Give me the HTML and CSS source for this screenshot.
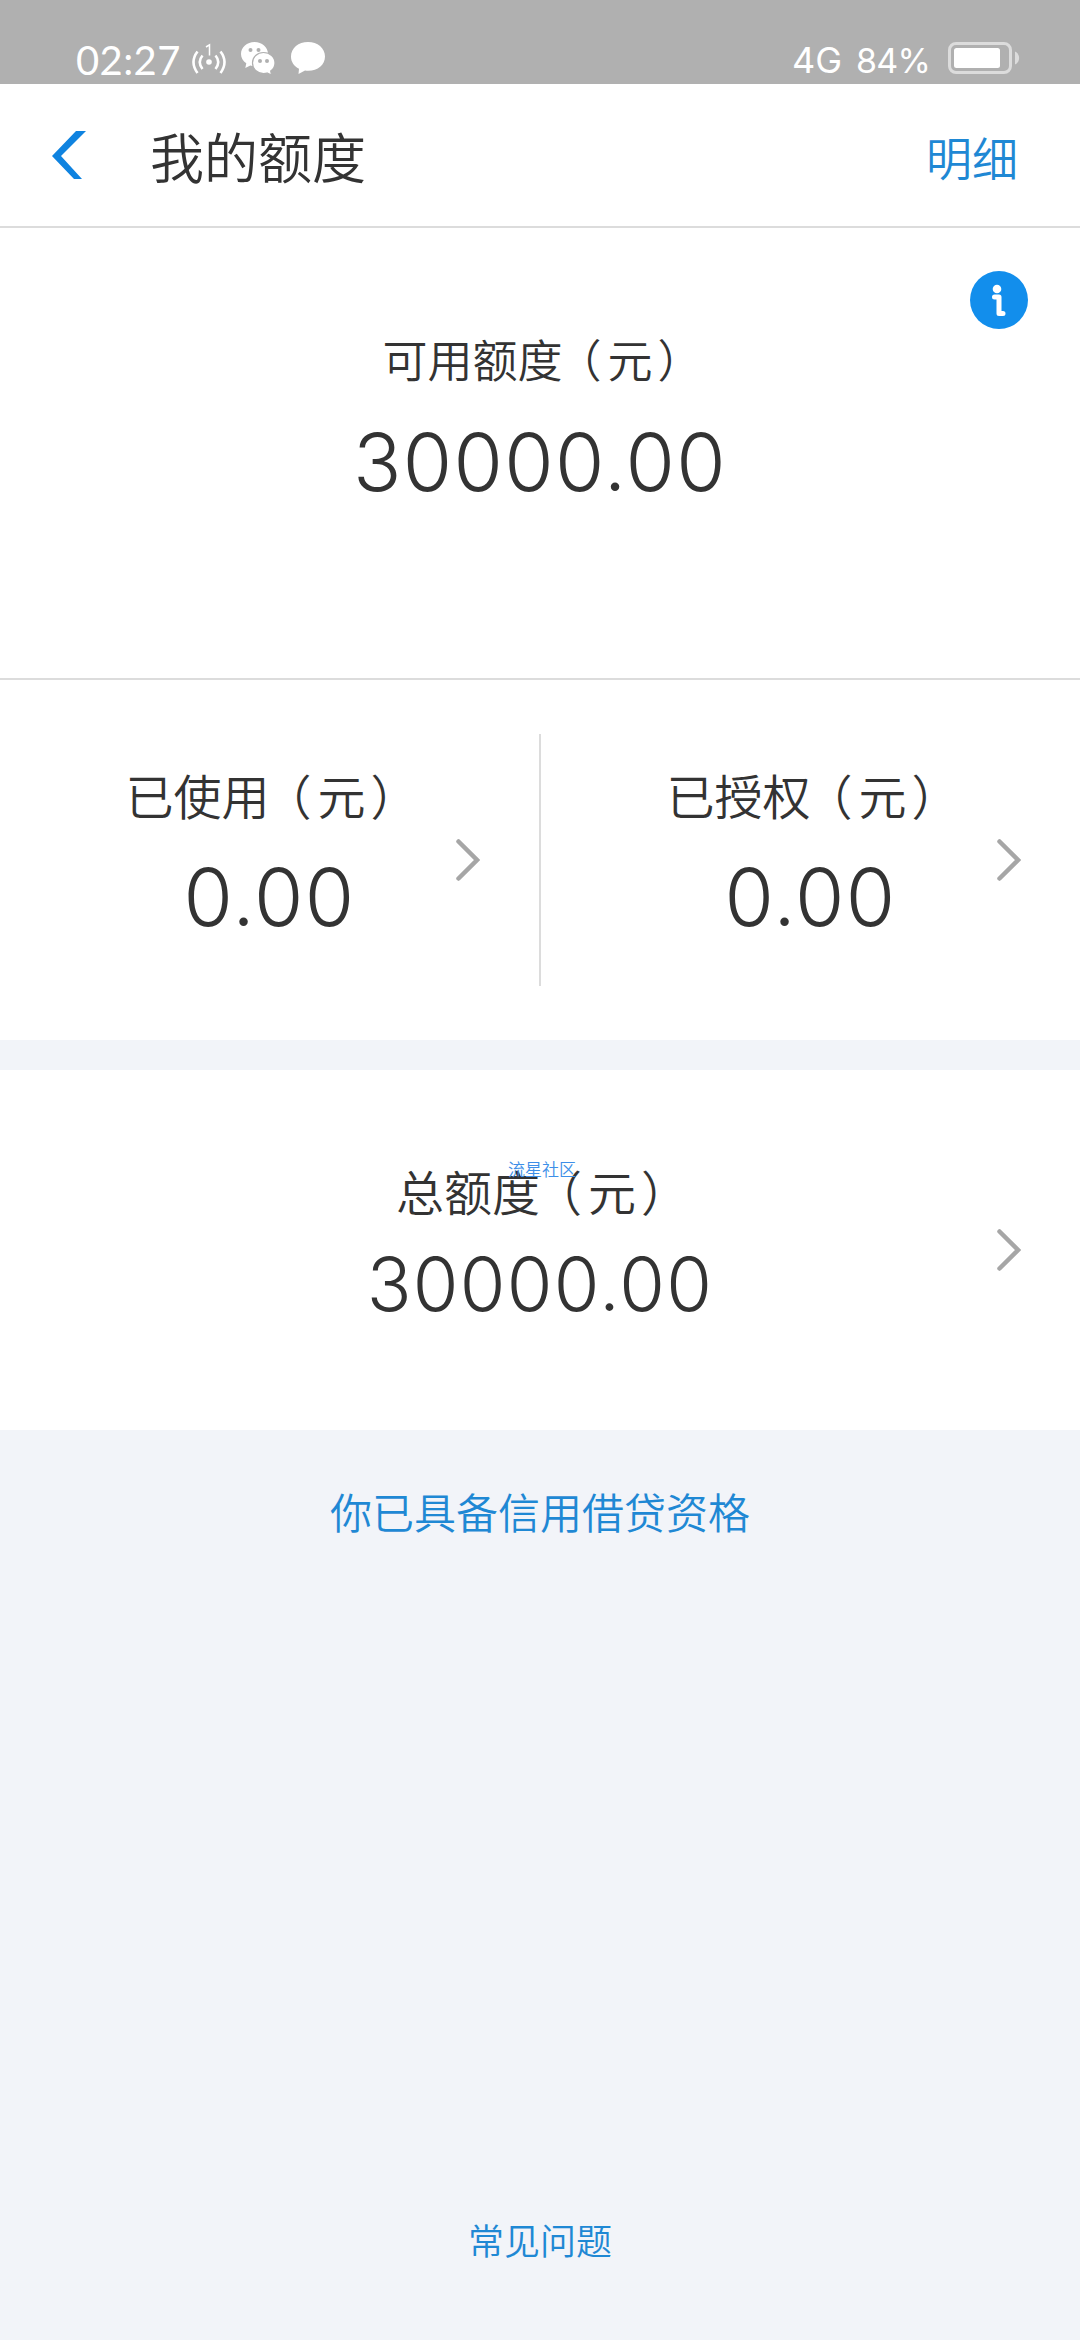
FILE: index.html
```html
<!DOCTYPE html>
<html lang="zh-CN">
<head>
    <meta charset="UTF-8">
    <meta name="viewport" content="width=device-width, initial-scale=1.0">
    <title>我的额度</title>
    <link rel="stylesheet" href="styles.css">
</head>
<body>
    <div class="status-bar">
        <span class="time">02:27</span>
        <svg class="hotspot" width="34" height="34" viewBox="0 0 34 34" fill="none" stroke="#fff" stroke-width="2.6">
            <path d="M5.5 8.5Q-2.5 19 5.5 30M10.5 12.5Q5 19 10.5 26M28.5 8.5Q36.5 19 28.5 30M23.5 12.5Q29 19 23.5 26"/>
            <circle cx="17" cy="19" r="2.8" fill="#fff" stroke="none"/>
            <path d="M14 4L17.5 1.8V12.5" stroke-width="1.5"/>
        </svg>
        <svg class="wechat" width="34" height="34" viewBox="0 0 34 34">
            <path d="M13.5 0C6 0 0 5.2 0 12c0 4 2 7.2 5.3 9.3L4.3 26l5-2.5c1.3.4 2.7.5 4.2.5C21 24 27 19 27 12S21 0 13.5 0z" fill="#fff"/>
            <path d="M22.5 10.5C16.3 10.5 11.5 15 11.5 21S16.3 31.5 22.5 31.5c1.2 0 2.4-.1 3.5-.5l4.5 2-.8-4C32.5 27 34 24.2 34 21c0-6-5-10.500-11.500-10.500z" fill="#fff" stroke="#b0b0b0" stroke-width="1.2"/>
            <g fill="#b0b0b0">
                <circle cx="9.5" cy="8" r="2"/>
                <circle cx="17.5" cy="8" r="2"/>
                <circle cx="19" cy="19" r="2"/>
                <circle cx="26" cy="19" r="2"/>
            </g>
        </svg>
        <svg class="bubble" width="34" height="34" viewBox="0 0 34 34">
            <path d="M17 0C7.5 0 0 6 0 14.5c0 5.5 3 9.7 8 12.3L7.5 32l6.5-3.5c11 1.5 20-4.5 20-14C34 6 26.5 0 17 0z" fill="#fff"/>
        </svg>
        <span class="network">4G</span>
        <span class="percent">84%</span>
        <svg class="battery" width="72" height="32" viewBox="0 0 72 32">
            <rect x="1.5" y="1.5" width="61" height="29" rx="6.5" fill="none" stroke="#dcdcdc" stroke-width="3"/>
            <rect x="6" y="6" width="46" height="20" rx="2.5" fill="#fff"/>
            <path d="M67 9.5C72.5 12 72.5 20 67 22.5z" fill="#dcdcdc"/>
        </svg>
    </div>

    <div class="header">
        <svg class="back" width="34" height="48" viewBox="0 0 34 48">
            <path d="M24 0H34L9 25L30 48H22L0 25z" fill="#0f83e0"/>
        </svg>
        <h1 class="title">我的额度</h1>
        <a class="detail">明细</a>
    </div>

    <div class="available">
        <div class="label">可用额度<span class="open">（</span>元<span class="close">）</span></div>
        <div class="amount">30000.00</div>
        <svg class="info" width="58" height="58" viewBox="0 0 58 58">
            <circle cx="29" cy="29" r="29" fill="#128eec"/>
            <circle cx="27" cy="18" r="4.3" fill="#fff"/>
            <path d="M24.5 26H29V42.5H33" fill="none" stroke="#fff" stroke-width="5" stroke-linecap="round" stroke-linejoin="round"/>
        </svg>
    </div>

    <div class="split">
        <div class="cell">
            <div class="label">已使用<span class="open">（</span>元<span class="close">）</span></div>
            <div class="amount">0.00</div>
            <svg class="arrow" width="24" height="42" viewBox="0 0 24 42"><path d="M2.5 2.5L21 21L2.5 39.5"/></svg>
        </div>
        <div class="line"></div>
        <div class="cell">
            <div class="label">已授权<span class="open">（</span>元<span class="close">）</span></div>
            <div class="amount">0.00</div>
            <svg class="arrow" width="24" height="42" viewBox="0 0 24 42"><path d="M2.5 2.5L21 21L2.5 39.5"/></svg>
        </div>
    </div>

    <div class="total">
        <div class="label">总额度<span class="open">（</span>元<span class="close">）</span></div>
        <div class="amount">30000.00</div>
        <svg class="arrow" width="24" height="42" viewBox="0 0 24 42"><path d="M2.5 2.5L21 21L2.5 39.5"/></svg>
        <span class="watermark">流星社区</span>
    </div>

    <div class="footer">
        <a class="credit">你已具备信用借贷资格</a>
        <a class="faq">常见问题</a>
    </div>
</body>
</html>
```

FILE: styles.css
```css
* {
    box-sizing: border-box;
}
body {
    margin: 0;
    width: 1080px;
    height: 2340px;
    display: flex;
    flex-direction: column;
    overflow: hidden;
    background-color: #f2f4f9;
    color: #333;
    font-family: "Noto Sans CJK SC", sans-serif;
    font-weight: 350;
}
.status-bar {
    height: 84px;
    padding: 36px 60px 0 76px;
    display: flex;
    align-items: flex-start;
    background-color: #b0b0b0;
    color: #fff;
    white-space: nowrap;
}
.time {
    width: 116px;
    font: 400 40px/48px Lato, sans-serif;
    letter-spacing: 0.4px;
}
.hotspot {
    margin-top: 7px;
}
.wechat {
    margin: 6px 0 0 15px;
}
.bubble {
    margin: 6px 0 0 16px;
}
.network {
    margin-left: auto;
    width: 64px;
    font: 400 36px/48px Inter, sans-serif;
}
.percent {
    width: 92px;
    font: 400 34px/49px Inter, sans-serif;
    letter-spacing: -0.8px;
}
.battery {
    margin-top: 6px;
}
.header {
    height: 144px;
    padding: 0 62px 0 52px;
    display: flex;
    align-items: center;
    background-color: #fff;
    border-bottom: 2px solid #dcdcdc;
}
.title {
    margin: 2px 0 0 64px;
    font-size: 54px;
    line-height: 80px;
    font-weight: 350;
}
.detail {
    margin: 2px 0 0 auto;
    font-size: 46px;
    color: #1f88d4;
}
.label {
    font-size: 48px;
    line-height: 70px;
}
/* even out the full-width brackets around the unit */
.open {
    margin: 0 6px 0 -6px;
}
.close {
    margin: 0 -5px 0 5px;
}
.amount {
    font-family: Inter, sans-serif;
    font-weight: 300;
    font-size: 80px;
    line-height: 100px;
    letter-spacing: 1.3px;
}
.available {
    position: relative;
    height: 452px;
    padding-top: 96px;
    background-color: #fff;
    border-bottom: 2px solid #dcdcdc;
    text-align: center;
}
.available .label {
    font-size: 45px;
}
.available .amount {
    margin-top: 18px;
}
.info {
    position: absolute;
    top: 43px;
    right: 52px;
}
.split {
    height: 360px;
    display: flex;
    align-items: center;
    background-color: #fff;
}
.cell {
    position: relative;
    flex: 1;
    height: 100%;
    padding-top: 79px;
    text-align: center;
}
.cell .amount {
    margin-top: 18px;
}
.line {
    width: 2px;
    height: 252px;
    background-color: #dcdcdc;
}
.arrow {
    position: absolute;
    top: 159px;
    right: 59px;
    fill: none;
    stroke: #a6a6a6;
    stroke-width: 4.5;
    stroke-linecap: round;
}
.total {
    position: relative;
    height: 360px;
    margin-top: 30px;
    padding-top: 85px;
    background-color: #fff;
    text-align: center;
}
.total .amount {
    margin-top: 9px;
    font-size: 74px;
}
.watermark {
    position: absolute;
    top: 87px;
    left: 508px;
    font-size: 17px;
    line-height: 24px;
    color: #3d8fe8;
}
.footer {
    flex: 1;
    padding: 51px 0 71px;
    display: flex;
    flex-direction: column;
    justify-content: space-between;
    align-items: center;
    color: #1f88d4;
}
.credit {
    font-size: 42px;
    line-height: 60px;
}
.faq {
    font-size: 36px;
    line-height: 60px;
}
```
